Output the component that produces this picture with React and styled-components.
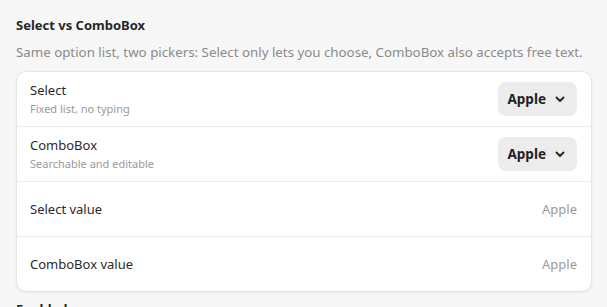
import styled, { createGlobalStyle } from "styled-components"

const Global = createGlobalStyle`
  body {
    margin: 0;
    background: #f7f7f7;
    font-family: "Noto Sans", "Open Sans", sans-serif;
    color: #222;
  }
`

const Page = styled.div`
  padding: 15px 16px 0 16px;
`

const Title = styled.h2`
  margin: 0;
  font-size: 13px;
  font-weight: 700;
  line-height: 20px;
  color: #262626;
`

const Subtitle = styled.p`
  margin: 7px 0 0 0;
  font-size: 13.3px;
  line-height: 20px;
  color: #8a8a8a;
`

const Card = styled.div`
  margin-top: 9px;
  width: 574px;
  background: #fff;
  border: 1px solid #e6e6e6;
  border-radius: 10px;
  box-shadow: 0 1px 3px rgba(0, 0, 0, 0.06);
`

const Row = styled.div`
  display: flex;
  align-items: center;
  justify-content: space-between;
  height: 54px;
  padding: 0 14px 0 13px;
  border-top: ${(p) => (p.$first ? "none" : "1px solid #ececec")};
`

const Labels = styled.div`
  display: flex;
  flex-direction: column;
  gap: 3px;
`

const Label = styled.span`
  font-size: 13px;
  color: #2a2a2a;
  line-height: 17px;
`

const Hint = styled.span`
  font-size: 11px;
  color: #9a9a9a;
  line-height: 14px;
`

const Picker = styled.button`
  display: flex;
  align-items: center;
  gap: 9px;
  height: 34px;
  padding: 0 12px 0 10px;
  border: none;
  border-radius: 8px;
  background: #ececec;
  font-family: inherit;
  font-size: 13.5px;
  font-weight: 700;
  color: #222;
`

const Value = styled.span`
  font-size: 13px;
  color: #9a9a9a;
`

const Section = styled.h3`
  margin: 8px 0 0 0;
  font-size: 13px;
  font-weight: 700;
  color: #262626;
`

const Chevron = () => (
  <svg width="10" height="10" viewBox="0 0 10 10" fill="none">
    <path d="M1.5 3.5 L5 7 L8.5 3.5" stroke="#222" strokeWidth="1.8" strokeLinecap="round" strokeLinejoin="round" />
  </svg>
)

const App = () => {
  return (
    <Page>
      <Global />
      <Title>Select vs ComboBox</Title>
      <Subtitle>Same option list, two pickers: Select only lets you choose, ComboBox also accepts free text.</Subtitle>
      <Card>
        <Row $first>
          <Labels>
            <Label>Select</Label>
            <Hint>Fixed list, no typing</Hint>
          </Labels>
          <Picker>Apple <Chevron /></Picker>
        </Row>
        <Row>
          <Labels>
            <Label>ComboBox</Label>
            <Hint>Searchable and editable</Hint>
          </Labels>
          <Picker>Apple <Chevron /></Picker>
        </Row>
        <Row>
          <Label>Select value</Label>
          <Value>Apple</Value>
        </Row>
        <Row>
          <Label>ComboBox value</Label>
          <Value>Apple</Value>
        </Row>
      </Card>
      <Section>Enabled</Section>
    </Page>
  )
}

export default App
